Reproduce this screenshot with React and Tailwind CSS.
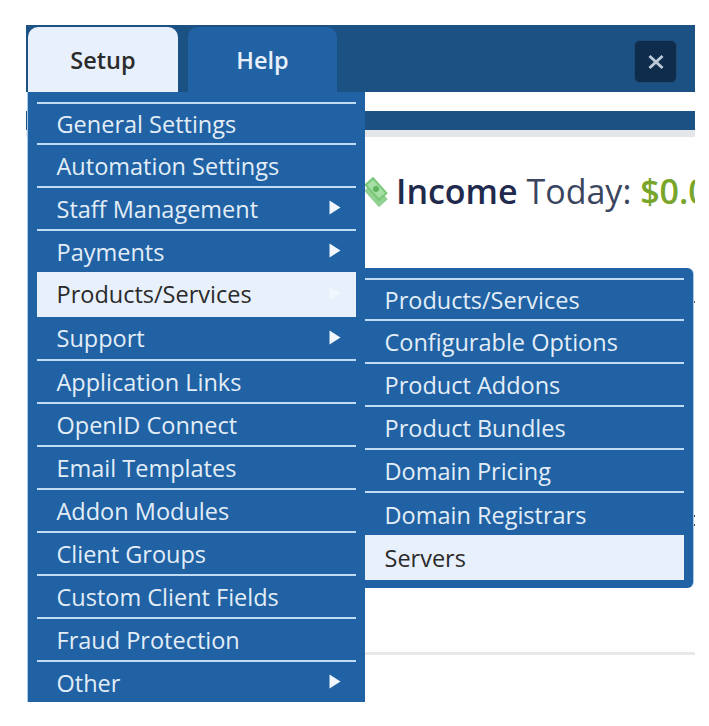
const FONT = "font-['Open_Sans',sans-serif]";

const mainItems = [
  { label: "General Settings", h: "h-[39px]" },
  { label: "Automation Settings", h: "h-[41px]" },
  { label: "Staff Management", h: "h-[41px]", caret: true },
  { label: "Payments", h: "h-[41px]", caret: true },
  { label: "Products/Services", h: "h-[45px]", caret: true, active: true },
  { label: "Support", h: "h-[42px]", caret: true, bare: true },
  { label: "Application Links", h: "h-[41px]" },
  { label: "OpenID Connect", h: "h-[41px]" },
  { label: "Email Templates", h: "h-[41px]" },
  { label: "Addon Modules", h: "h-[41px]" },
  { label: "Client Groups", h: "h-[41px]" },
  { label: "Custom Client Fields", h: "h-[41px]" },
  { label: "Fraud Protection", h: "h-[41px]" },
  { label: "Other", h: "h-[41px]", caret: true },
];

const subItems = [
  { label: "Products/Services", h: "h-[39px]" },
  { label: "Configurable Options", h: "h-[41px]" },
  { label: "Product Addons", h: "h-[41px]" },
  { label: "Product Bundles", h: "h-[41px]" },
  { label: "Domain Pricing", h: "h-[41px]" },
  { label: "Domain Registrars", h: "h-[42px]" },
  { label: "Servers", h: "h-[45px]", active: true },
];

const ticks = [
  { pos: "left-[1px] top-[276px]", color: "bg-[#9a5a78]" },
  { pos: "left-[1px] top-[310px]", color: "bg-[#3a3f55]" },
  { pos: "left-[1px] top-[352px]", color: "bg-[#9a5a78]" },
  { pos: "left-[667px] top-[276px]", color: "bg-[#6a4a68]" },
  { pos: "left-[667px] top-[490px]", color: "bg-[#3a3f55]" },
  { pos: "left-[667px] top-[499px]", color: "bg-[#3a3f55]" },
];

function Caret() {
  return (
    <svg width="12" height="15" viewBox="0 0 12 15" className="mt-[-2px] shrink-0">
      <path d="M0.5 0.5 L11.5 7.5 L0.5 14.5 Z" fill="#f2f7fd" />
    </svg>
  );
}

function Money() {
  return (
    <svg width="24" height="31" viewBox="0 0 24 31" className="shrink-0">
      <g transform="rotate(48 12 19)">
        <rect x="1" y="13" width="22" height="12" fill="#93d193" />
      </g>
      <g transform="rotate(48 12 13)">
        <rect x="1" y="7" width="22" height="12" fill="#78c878" />
        <rect x="3" y="9" width="18" height="8" fill="#a6dfa6" />
        <circle cx="12" cy="13" r="3" fill="#5fb35f" />
      </g>
    </svg>
  );
}

function Row({ label, caret, active, h, shift }) {
  return (
    <div
      className={`flex items-center justify-between pl-[19.5px] pr-[15px] ${h} ${
        active ? "bg-[#e8f0fc] text-[#2b2b2b]" : "text-[#e3edf8]"
      }`}
    >
      <span className={`leading-none ${shift}`}>{label}</span>
      {caret && <Caret />}
    </div>
  );
}

export default function App() {
  return (
    <div className={`h-[726px] w-[709px] overflow-hidden bg-white pl-[26px] pt-[25px] ${FONT}`}>
      <div className="relative w-[669px]">
        <header className="flex h-[67px] items-end gap-[10px] bg-[#1c5184] pl-[2px]">
          <div className="flex h-[65px] w-[150px] items-center justify-center rounded-t-[10px] bg-[#e8f0fc] pt-[2px] text-[23.5px] font-semibold text-[#2b2b2b]">
            Setup
          </div>
          <div className="flex h-[65px] w-[149px] items-center justify-center rounded-t-[10px] bg-[#2062a3] pt-[2px] text-[23.5px] font-semibold text-[#e8f0fb]">
            Help
          </div>
          <div className="mb-[9px] ml-auto mr-[18px] flex h-[43px] w-[43px] items-center justify-center rounded-[6px] border border-[#1f4a74] bg-[#0e2c4b]">
            <svg width="18" height="16" viewBox="0 0 18 16">
              <path d="M2.5 2 L15.5 14 M15.5 2 L2.5 14" stroke="#bccad8" strokeWidth="3" />
            </svg>
          </div>
        </header>

        <div className="mt-[19px] h-[19px] bg-[#1c5184]" />
        <div className="h-[7px] bg-[#e4e7ea]" />

        <div className="mt-[30px] flex h-[48px] items-center gap-[8px] overflow-hidden whitespace-nowrap pl-[338px] text-[34px] leading-none text-[#3a4560]">
          <Money />
          <div>
            <span className="font-semibold text-[#1f2a4d]">Income</span>{" "}
            <span>Today:</span>{" "}
            <span className="font-semibold text-[#79a52a]">$0.00</span>
          </div>
        </div>

        <div className="ml-[339px] mt-[437px] h-[3px] bg-[#e8e8e8]" />

        {ticks.map((t) => (
          <span key={t.pos} className={`absolute h-[2px] w-[2px] ${t.pos} ${t.color}`} />
        ))}

        {/* Setup dropdown */}
        <div className="absolute left-[2px] top-[67px] h-[610px] w-[337px] overflow-hidden bg-[#2062a3] px-[9px] pt-[10px] text-[23.5px] shadow-[-1px_0_0_#a9cbea]">
          {mainItems.map(({ label, caret, active, bare, h }) => (
            <div key={label} className={active || bare ? "" : "border-t-[2px] border-[#c0dcf5]"}>
              <Row label={label} caret={caret} active={active} h={h} shift={active ? "mt-[1px]" : "mt-[2px]"} />
            </div>
          ))}
        </div>

        {/* Products/Services flyout */}
        <div className="absolute left-[339px] top-[243px] h-[320px] w-[328px] overflow-hidden rounded-r-[6px] bg-[#2062a3] pr-[9px] pt-[10px] text-[23.5px] shadow-[1px_0_0_#a9cbea]">
          {subItems.map(({ label, active, h }) => (
            <div key={label} className={active ? "" : "border-t-[2px] border-[#c0dcf5]"}>
              <Row label={label} active={active} h={h} shift={active ? "mt-[2px]" : "mt-[3px]"} />
            </div>
          ))}
        </div>
      </div>
    </div>
  );
}
